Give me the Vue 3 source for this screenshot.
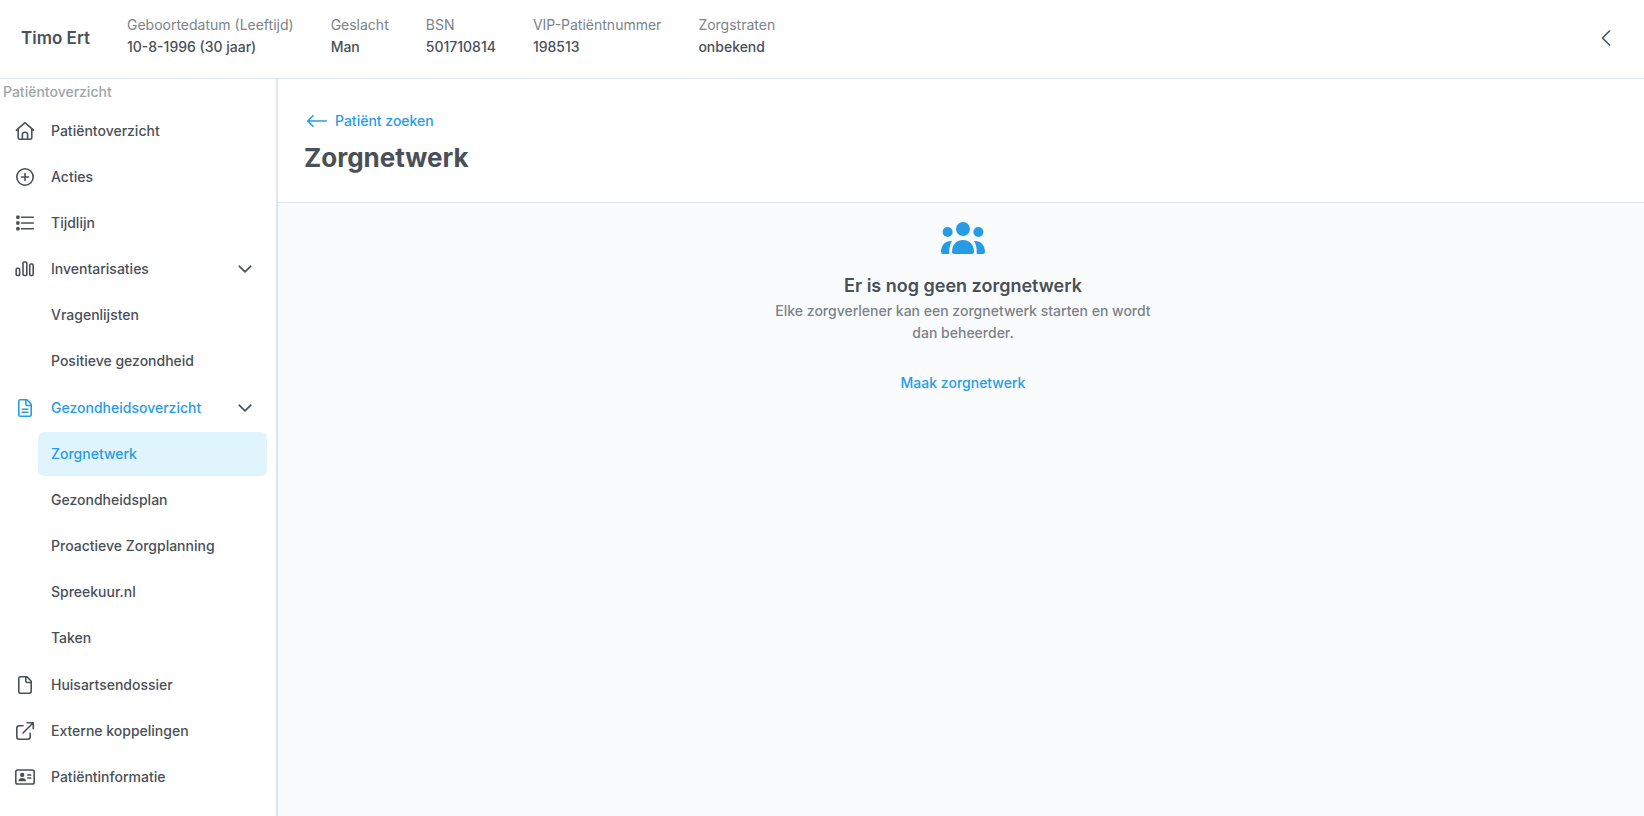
<script setup>
const patient = [
  { label: 'Geboortedatum (Leeftijd)', value: '10-8-1996 (30 jaar)' },
  { label: 'Geslacht', value: 'Man' },
  { label: 'BSN', value: '501710814' },
  { label: 'VIP-Patiëntnummer', value: '198513' },
  { label: 'Zorgstraten', value: 'onbekend' }
]

const menu = [
  { label: 'Patiëntoverzicht', icon: 'home' },
  { label: 'Acties', icon: 'plus' },
  { label: 'Tijdlijn', icon: 'list' },
  { label: 'Inventarisaties', icon: 'bars', children: ['Vragenlijsten', 'Positieve gezondheid'] },
  {
    label: 'Gezondheidsoverzicht',
    icon: 'filetext',
    active: true,
    children: ['Zorgnetwerk', 'Gezondheidsplan', 'Proactieve Zorgplanning', 'Spreekuur.nl', 'Taken']
  },
  { label: 'Huisartsendossier', icon: 'file' },
  { label: 'Externe koppelingen', icon: 'external' },
  { label: 'Patiëntinformatie', icon: 'card' }
]
const current = 'Zorgnetwerk'
</script>

<template>
  <div class="page">
    <header class="topbar">
      <strong class="name">Timo Ert</strong>
      <dl class="facts">
        <div v-for="f in patient" :key="f.label" class="fact">
          <dt>{{ f.label }}</dt>
          <dd>{{ f.value }}</dd>
        </div>
      </dl>
      <button class="collapse" type="button" aria-label="Inklappen">
        <svg width="24" height="24" viewBox="0 0 24 24"><path d="M16 4.500L8.500 12L16 19.500" /></svg>
      </button>
    </header>

    <div class="body">
      <nav class="sidebar" aria-label="Patiëntoverzicht">
        <p class="caption">Patiëntoverzicht</p>
        <ul class="menu">
          <li v-for="item in menu" :key="item.label" class="entry">
            <component
              :is="item.children ? 'button' : 'a'"
              :href="item.children ? undefined : '#'"
              :type="item.children ? 'button' : undefined"
              class="item"
              :class="{ active: item.active }"
            >
              <svg class="icon" width="20" height="20" viewBox="0 0 20 20" aria-hidden="true">
                <template v-if="item.icon === 'home'">
                  <path d="M1.500 9.200L9.200 2.300Q10 1.600 10.800 2.300L18.500 9.200M3.200 8V16.700Q3.200 18.200 4.700 18.200H15.300Q16.800 18.200 16.800 16.700V8M7.400 18V13.300Q7.400 11.300 10 11.300T12.600 13.300V18" />
                </template>
                <template v-else-if="item.icon === 'plus'">
                  <circle cx="10" cy="10" r="8.200" />
                  <path d="M10 6.500V13.500M6.500 10H13.500" />
                </template>
                <template v-else-if="item.icon === 'list'">
                  <path d="M6.500 4.200H18.300M6.500 10H18.300M6.500 15.800H18.300" />
                  <g class="solid">
                    <rect x="1.200" y="2.500" width="3.400" height="3.400" rx=".8" />
                    <rect x="1.200" y="8.300" width="3.400" height="3.400" rx=".8" />
                    <rect x="1.200" y="14.100" width="3.400" height="3.400" rx=".8" />
                  </g>
                </template>
                <template v-else-if="item.icon === 'bars'">
                  <rect x="1.200" y="9.200" width="3.400" height="7.300" rx="1" />
                  <rect x="8" y="3" width="3.800" height="13.500" rx="1.200" />
                  <rect x="14.700" y="5" width="3.500" height="11.500" rx="1.200" />
                </template>
                <template v-else-if="item.icon === 'file' || item.icon === 'filetext'">
                  <path d="M12 1.800H5.300Q3.800 1.800 3.800 3.300V16.700Q3.800 18.200 5.300 18.200H14.700Q16.200 18.200 16.200 16.700V6.200Z" />
                  <path d="M10.800 2V6Q10.800 7.500 12.300 7.500H16" />
                  <path v-if="item.icon === 'filetext'" d="M7.200 11.200H12.800M7.200 14.200H12.800" />
                </template>
                <template v-else-if="item.icon === 'external'">
                  <path d="M8 4.800H4.200Q1.800 4.800 1.800 7.200V15.800Q1.800 18.200 4.200 18.200H12.800Q15.200 18.200 15.200 15.800V12.200M12.200 1.700H18.300V7.800M18.200 1.800L8 12" />
                </template>
                <template v-else>
                  <rect x=".8" y="3" width="18.400" height="14" rx="1.800" />
                  <path d="M12.800 8H15.800M12.800 11H15.800" />
                  <g class="solid">
                    <circle cx="7.200" cy="7.900" r="2.200" />
                    <path d="M3.400 14.200Q3.600 11 7.200 11T11 14.200Z" />
                  </g>
                </template>
              </svg>
              <span class="label">{{ item.label }}</span>
              <svg v-if="item.children" class="chevron" width="14" height="14" viewBox="0 0 14 14" aria-hidden="true">
                <path d="M1.200 4.200L7 9.800L12.800 4.200" />
              </svg>
            </component>
            <ul v-if="item.children" class="submenu">
              <li v-for="child in item.children" :key="child">
                <a href="#" class="subitem" :class="{ current: child === current }">{{ child }}</a>
              </li>
            </ul>
          </li>
        </ul>
      </nav>

      <main class="main">
        <div class="heading">
          <a href="#" class="back">
            <svg width="20" height="12" viewBox="0 0 20 12" aria-hidden="true"><path d="M19.300 6H1M6 .8L.8 6L6 11.200" /></svg>
            Patiënt zoeken
          </a>
          <h1>Zorgnetwerk</h1>
        </div>
        <section class="empty">
          <svg class="people" width="44" height="32" viewBox="0 0 44 32" aria-hidden="true">
            <circle cx="22" cy="7" r="7" />
            <circle cx="6.600" cy="10" r="5" />
            <circle cx="37.400" cy="10" r="5" />
            <path d="M11 30C11 22 16 18 22 18S33 22 33 30Q33 32 31 32H13Q11 32 11 30Z" />
            <path d="M11 19C9 22 8 26 8.300 32H2Q0 32 0 30C0 23 4.500 18.300 11 19Z" />
            <path d="M33 19C35 22 36 26 35.700 32H42Q44 32 44 30C44 23 39.500 18.300 33 19Z" />
          </svg>
          <h2>Er is nog geen zorgnetwerk</h2>
          <p>Elke zorgverlener kan een zorgnetwerk starten en wordt dan beheerder.</p>
          <button type="button" class="create">Maak zorgnetwerk</button>
        </section>
      </main>
    </div>
  </div>
</template>

<style>
body {
  margin: 0;
}
</style>

<style scoped>
.page {
  display: flex;
  flex-direction: column;
  min-height: 100vh;
  background: #fff;
  color: #495057;
  font: 500 14px/22px Inter, sans-serif;
}
ul, dl, dd, p, h1, h2 {
  margin: 0;
  padding: 0;
}
ul {
  list-style: none;
}
a {
  color: inherit;
  text-decoration: none;
}
button {
  border: 0;
  background: none;
  color: inherit;
  font: inherit;
  text-align: left;
  cursor: pointer;
}
svg {
  flex: none;
  fill: none;
  stroke: currentColor;
  stroke-width: 1.600;
  stroke-linecap: round;
  stroke-linejoin: round;
}
.solid {
  fill: currentColor;
  stroke: none;
}
.topbar {
  display: flex;
  align-items: center;
  gap: 37px;
  box-sizing: border-box;
  padding: 14px 26px 17px 21px;
  border-bottom: 1px solid #dfe7ee;
}
.name {
  font-size: 17px;
  font-weight: 600;
}
.facts {
  display: flex;
  flex: 1;
  gap: 37px;
  padding-bottom: 3px;
}
dt {
  color: #7b8387;
  font-weight: 400;
}
.collapse {
  display: flex;
  padding: 0;
}
.collapse svg {
  stroke-linecap: butt;
}
.body {
  display: flex;
  flex: 1;
}
.sidebar {
  box-sizing: border-box;
  width: 278px;
  flex: none;
  border-right: 2px solid #dfe7ee;
}
.caption {
  padding: 2px 3px 6px;
  color: #9da5a9;
}
.menu {
  padding-right: 9px;
}
.item,
.subitem {
  display: flex;
  align-items: center;
  box-sizing: border-box;
  min-height: 44px;
  margin-bottom: 2px;
}
.item {
  width: 100%;
  gap: 16px;
  padding: 0 15px;
}
.label {
  flex: 1;
}
.submenu {
  padding: 0 0 1px 38px;
}
.subitem {
  padding: 0 13px;
  border-radius: 6px;
}
.active .icon,
.active .label,
.current {
  color: #279ce5;
}
.current {
  background: #e0f4fe;
}
.main {
  display: flex;
  flex: 1;
  flex-direction: column;
  background: #fafbfd;
}
.heading {
  padding: 31px 26px 27px;
  border-bottom: 1px solid #dfe7ee;
  background: #fff;
}
.back {
  display: inline-flex;
  align-items: center;
  gap: 8px;
  padding-left: 3px;
  color: #279ce5;
}
h1 {
  margin-top: 8px;
  font-size: 26px;
  line-height: 34px;
  font-weight: 700;
}
.empty {
  display: flex;
  flex-direction: column;
  align-items: center;
  padding: 19px 24px 19px 28px;
  text-align: center;
}
.people {
  fill: #279ce5;
  stroke: none;
  margin-bottom: 20px;
}
h2 {
  font-size: 18px;
  line-height: 24px;
  font-weight: 600;
}
.empty p {
  max-width: 390px;
  margin: 2px 0 28px;
  color: #7b8387;
}
.create {
  padding: 0;
  color: #279ce5;
}
</style>
